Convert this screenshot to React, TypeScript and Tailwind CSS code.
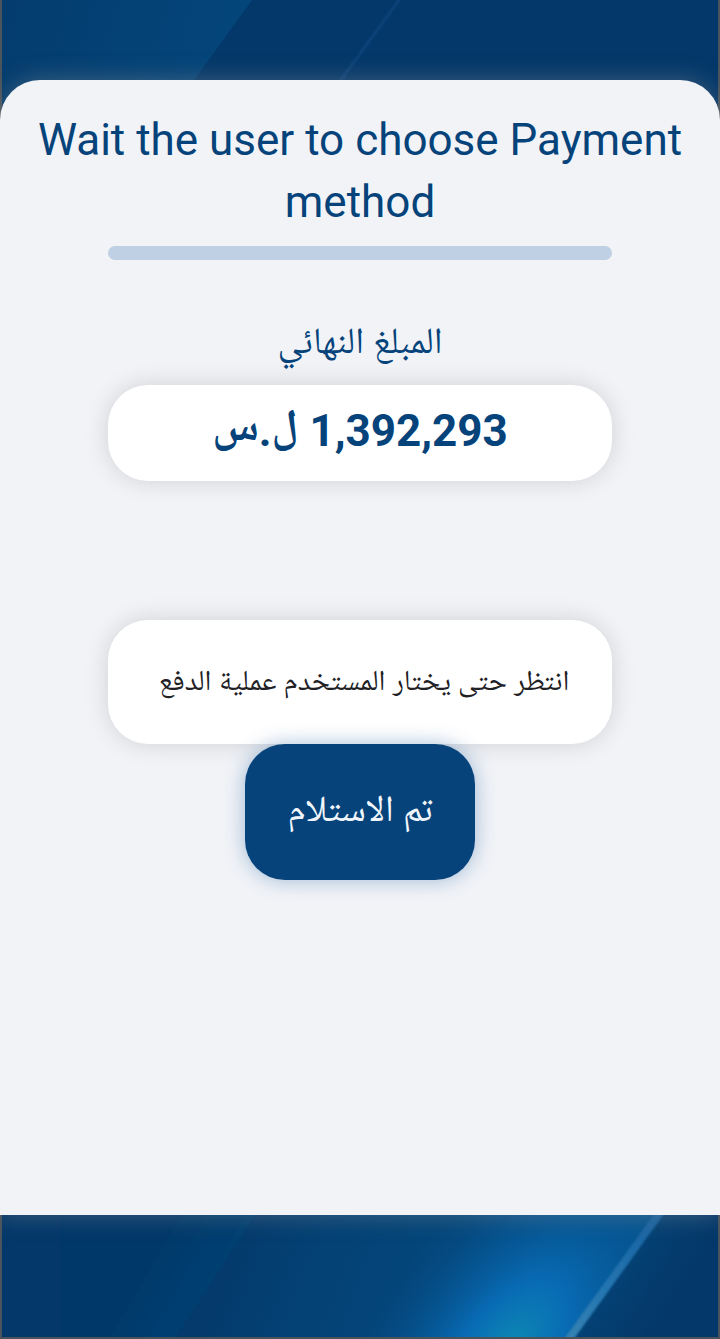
function Backdrop() {
  return (
    <svg
      className="absolute inset-0 h-full w-full"
      viewBox="0 0 720 1339"
      preserveAspectRatio="none"
      aria-hidden="true"
    >
      <defs>
        <linearGradient id="topBeam" gradientUnits="userSpaceOnUse" x1="0" y1="0" x2="230" y2="60">
          <stop offset="0" stopColor="#043c6e" />
          <stop offset="1" stopColor="#04457a" />
        </linearGradient>
        <linearGradient id="lowBeam" gradientUnits="userSpaceOnUse" x1="215" y1="1275" x2="560" y2="1400">
          <stop offset="0" stopColor="#043a6c" />
          <stop offset="0.2" stopColor="#044073" />
          <stop offset="0.6" stopColor="#04477b" />
          <stop offset="1" stopColor="#055590" />
        </linearGradient>
        <linearGradient id="bandFade" gradientUnits="userSpaceOnUse" x1="140" y1="1250" x2="215" y2="1295">
          <stop offset="0" stopColor="#04386a" />
          <stop offset="1" stopColor="#044072" />
        </linearGradient>
        <radialGradient
          id="glow"
          gradientUnits="userSpaceOnUse"
          cx="0"
          cy="0"
          r="1"
          gradientTransform="translate(508 1350) rotate(-52) scale(250 135)"
        >
          <stop offset="0" stopColor="#0d8bb0" />
          <stop offset="0.14" stopColor="#0b7cb4" />
          <stop offset="0.32" stopColor="#086bb4" />
          <stop offset="0.6" stopColor="#065a9a" stopOpacity="0.7" />
          <stop offset="0.82" stopColor="#065190" stopOpacity="0.3" />
          <stop offset="1" stopColor="#054a80" stopOpacity="0" />
        </radialGradient>
        <linearGradient id="streak" gradientUnits="userSpaceOnUse" x1="665" y1="1205" x2="568" y2="1339">
          <stop offset="0" stopColor="#175f9d" />
          <stop offset="0.6" stopColor="#2375b1" />
          <stop offset="1" stopColor="#3583b3" />
        </linearGradient>
        <linearGradient id="rightFade" gradientUnits="userSpaceOnUse" x1="600" y1="1290" x2="655" y2="1325">
          <stop offset="0" stopColor="#044275" />
          <stop offset="1" stopColor="#04386a" />
        </linearGradient>
        <filter id="soft">
          <feGaussianBlur stdDeviation="1" />
        </filter>
      </defs>
      <rect width="720" height="1339" fill="#04386a" />
      <path d="M0 0H252L194 80L170 120H0Z" fill="url(#topBeam)" />
      <path d="M402 -4L338 84L320 114" stroke="#0b437a" strokeWidth="3" fill="none" filter="url(#soft)" />
      <path d="M268 1200H666L566 1339H170Z" fill="url(#lowBeam)" />
      <path d="M60 1200H266L170 1345H60Z" fill="url(#bandFade)" filter="url(#soft)" />
      <path d="M266 1200H666L566 1339H170Z" fill="url(#glow)" />
      <path d="M666 1200H720V1339H566Z" fill="url(#rightFade)" />
      <path d="M667 1203L566 1343" stroke="url(#streak)" strokeWidth="8" filter="url(#soft)" />
      <path d="M1 0V1339M719 0V1339M0 1338H720" stroke="#4b535b" strokeWidth="2" fill="none" />
    </svg>
  );
}

export default function App() {
  return (
    <div className="relative flex min-h-screen flex-col overflow-hidden bg-[#04386a] pt-20 pb-[124px] font-[Roboto,'Noto_Naskh_Arabic_UI','Noto_Naskh_Arabic','Noto_Sans_Arabic','DejaVu_Sans',sans-serif] text-[#05437a]">
      <Backdrop />
      <main className="relative flex flex-1 flex-col items-center rounded-t-[40px] bg-[#f1f3f7] pt-[29px] shadow-[0_0_24px_rgba(150,150,150,0.4)]">
        <h1 className="px-7 text-center text-[44px] leading-[62px]">
          Wait the user to choose Payment method
        </h1>
        <div className="mt-[13px] h-3.5 w-[70%] rounded-full bg-[#bfcfe4]" />

        <section className="mt-[58px] flex w-[70%] flex-col items-center" dir="rtl" lang="ar">
          <h2 className="text-[37px] leading-[56px]">المبلغ النهائي</h2>
          <p className="mt-[11px] w-full rounded-[40px] bg-white pt-3.5 pb-[18px] text-center text-[44px] leading-[64px] font-bold shadow-[0_0_24px_rgba(0,0,0,0.14)]">
            1,392,293 ل.س
          </p>
        </section>

        <section className="mt-[139px] flex w-full flex-col items-center" dir="rtl" lang="ar">
          <p className="w-[70%] rounded-[40px] bg-white ps-8 pe-10 pt-[42px] pb-[38px] text-center text-[29px] leading-[44px] text-[#212125] shadow-[0_0_24px_rgba(0,0,0,0.14)]">
            انتظر حتى يختار المستخدم عملية الدفع
          </p>
          <button
            type="button"
            className="w-[32%] rounded-[40px] bg-[#05437a] pt-[42px] pb-[38px] text-[37px] leading-[56px] text-[#f1f6fc] shadow-[0_0_20px_rgba(5,75,150,0.35)]"
          >
            تم الاستلام
          </button>
        </section>
      </main>
    </div>
  );
}
